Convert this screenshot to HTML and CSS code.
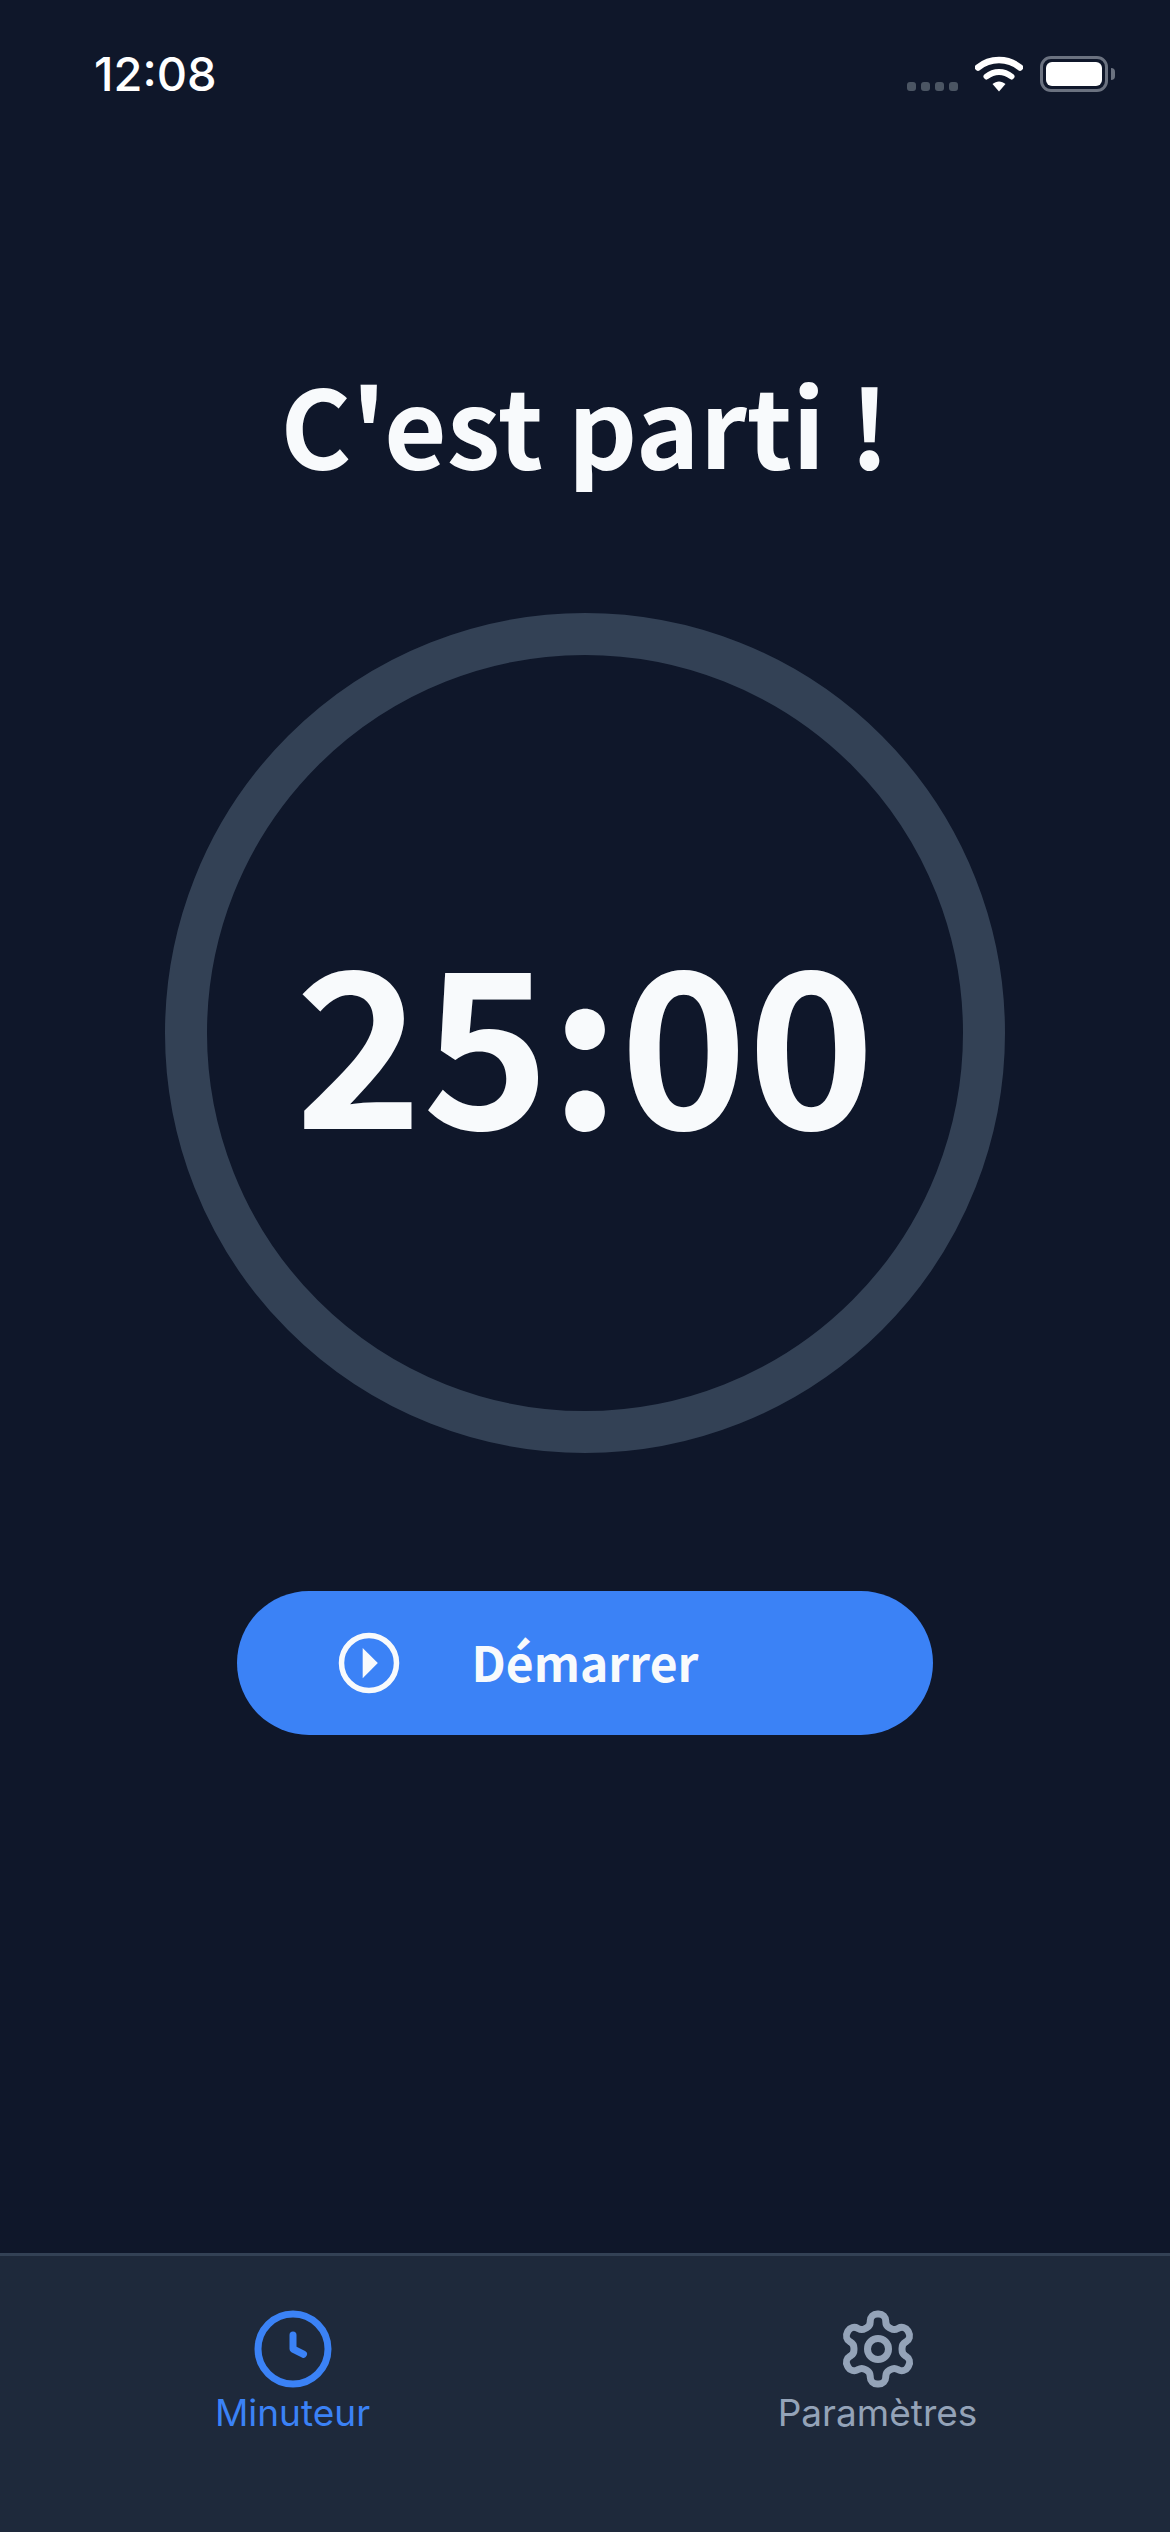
FILE: index.html
```html
<!DOCTYPE html>
<html lang="fr">
<head>
    <meta charset="UTF-8">
    <meta name="viewport" content="width=device-width, initial-scale=1.0">
    <title>Minuteur</title>
    <link rel="stylesheet" href="styles.css">
</head>
<body>
    <div class="app">
        <div class="status-bar">
            <span class="clock-time">12:08</span>
            <div class="status-icons">
                <div class="signal">
                    <span class="dot"></span>
                    <span class="dot"></span>
                    <span class="dot"></span>
                    <span class="dot"></span>
                </div>
                <svg class="wifi" viewBox="0 0 48 36" fill="none" stroke="#fff">
                    <path d="M3 11.5C15 1.5 33 1.5 45 11.5" stroke-width="6.5" stroke-linecap="round"/>
                    <path d="M11.5 20.5C19 14.5 29 14.5 36.5 20.5" stroke-width="6" stroke-linecap="round"/>
                    <path d="M17.5 28C21.5 24.5 26.500 24.500 30.500 28L24 35.500Z" fill="#fff" stroke="none"/>
                </svg>
                <div class="battery">
                    <div class="battery-body"><div class="battery-level"></div></div>
                    <div class="battery-nub"></div>
                </div>
            </div>
        </div>

        <main class="timer-screen">
            <h1 class="title">C'est parti !</h1>
            <div class="ring">
                <span class="time-left">25:00</span>
            </div>
            <button class="start-btn" type="button">
                <svg class="start-icon" viewBox="0 0 24 24" fill="none" stroke="currentColor" stroke-width="2">
                    <circle cx="12" cy="12" r="10"/>
                    <polygon points="9.700 6.500 15.200 12 9.700 17.500" fill="currentColor" stroke="none"/>
                </svg>
                <span class="start-label">Démarrer</span>
            </button>
        </main>

        <nav class="tab-bar">
            <div class="tab active">
                <svg class="tab-icon" viewBox="0 0 24 24" fill="none" stroke="currentColor" stroke-width="2" stroke-linecap="round" stroke-linejoin="round">
                    <circle cx="12" cy="12" r="10"/>
                    <polyline points="12 8 12 12 15 13.500"/>
                </svg>
                <span>Minuteur</span>
            </div>
            <div class="tab">
                <svg class="tab-icon" viewBox="0 0 24 24" fill="none" stroke="currentColor" stroke-width="2" stroke-linecap="round" stroke-linejoin="round">
                    <path d="M12.220 2h-.44a2 2 0 0 0-2 2v.18a2 2 0 0 1-1 1.730l-.43.25a2 2 0 0 1-2 0l-.15-.08a2 2 0 0 0-2.730.73l-.22.38a2 2 0 0 0 .73 2.730l.15.1a2 2 0 0 1 1 1.720v.51a2 2 0 0 1-1 1.740l-.15.09a2 2 0 0 0-.73 2.730l.22.38a2 2 0 0 0 2.730.73l.15-.08a2 2 0 0 1 2 0l.43.25a2 2 0 0 1 1 1.730V20a2 2 0 0 0 2 2h.44a2 2 0 0 0 2-2v-.18a2 2 0 0 1 1-1.730l.43-.25a2 2 0 0 1 2 0l.15.08a2 2 0 0 0 2.730-.73l.22-.39a2 2 0 0 0-.73-2.730l-.15-.08a2 2 0 0 1-1-1.740v-.5a2 2 0 0 1 1-1.740l.15-.09a2 2 0 0 0 .73-2.730l-.22-.38a2 2 0 0 0-2.730-.73l-.15.08a2 2 0 0 1-2 0l-.43-.25a2 2 0 0 1-1-1.730V4a2 2 0 0 0-2-2z"/>
                    <circle cx="12" cy="12" r="3"/>
                </svg>
                <span>Paramètres</span>
            </div>
        </nav>
    </div>
</body>
</html>
```
FILE: styles.css
```css
* {
    box-sizing: border-box;
}
body {
    margin: 0;
    background-color: #0f172a;
    font-family: "Noto Sans CJK SC", "Noto Sans", sans-serif;
}
.app {
    display: flex;
    flex-direction: column;
    height: 2532px;
    overflow: hidden;
}

/* status bar */
.status-bar {
    display: flex;
    justify-content: space-between;
    align-items: flex-start;
    height: 132px;
    padding: 49px 55px 0 94px;
}
.clock-time {
    font-family: Inter, sans-serif;
    font-size: 47px;
    font-weight: 500;
    line-height: 50px;
    color: #fff;
}
.status-icons {
    display: flex;
    align-items: flex-end;
    padding-top: 7px;
}
.signal {
    display: flex;
    gap: 5px;
    margin-right: 17px;
    padding-bottom: 1px;
}
.dot {
    width: 9px;
    height: 9px;
    border-radius: 3px;
    background: #4b5563;
}
.wifi {
    width: 48px;
    height: 36px;
    margin-right: 17px;
}
.battery {
    display: flex;
    align-items: center;
}
.battery-body {
    width: 68px;
    height: 36px;
    padding: 3px;
    border: 3px solid #6b7280;
    border-radius: 11px;
}
.battery-level {
    height: 100%;
    background: #fff;
    border-radius: 6px;
}
.battery-nub {
    width: 4px;
    height: 12px;
    margin-left: 3px;
    background: #6b7280;
    border-radius: 0 6px 6px 0;
}

/* timer */
.timer-screen {
    flex: 1;
    display: flex;
    flex-direction: column;
    align-items: center;
}
.title {
    margin: 215px 0 0;
    font-size: 108px;
    font-weight: 700;
    line-height: 150px;
    color: #f8fafc;
}
.ring {
    display: flex;
    justify-content: center;
    align-items: center;
    width: 840px;
    height: 840px;
    margin-top: 116px;
    border: 42px solid #334155;
    border-radius: 50%;
}
.time-left {
    padding-top: 4px;
    font-size: 216px;
    font-weight: 700;
    line-height: 1;
    color: #f8fafc;
}
.start-btn {
    display: grid;
    grid-template-columns: 1fr auto 1fr;
    align-items: center;
    width: 696px;
    height: 144px;
    margin-top: 138px;
    padding: 0;
    border: none;
    border-radius: 72px;
    background: #3b82f6;
    color: #f8fafc;
    font-family: inherit;
    font-size: 48px;
    font-weight: 700;
}
.start-icon {
    justify-self: end;
    width: 66px;
    height: 66px;
    margin-right: 70px;
}
.start-label {
    padding-bottom: 5px;
}

/* tabs */
.tab-bar {
    display: flex;
    height: 279px;
    background: #1e293b;
    border-top: 3px solid #334155;
}
.tab {
    flex: 1;
    display: flex;
    flex-direction: column;
    align-items: center;
    padding-top: 51px;
    font-family: Inter, sans-serif;
    font-size: 37px;
    line-height: 44px;
    color: #94a3b8;
}
.tab.active {
    color: #3b82f6;
}
.tab-icon {
    display: block;
    width: 84px;
    height: 84px;
}
```
